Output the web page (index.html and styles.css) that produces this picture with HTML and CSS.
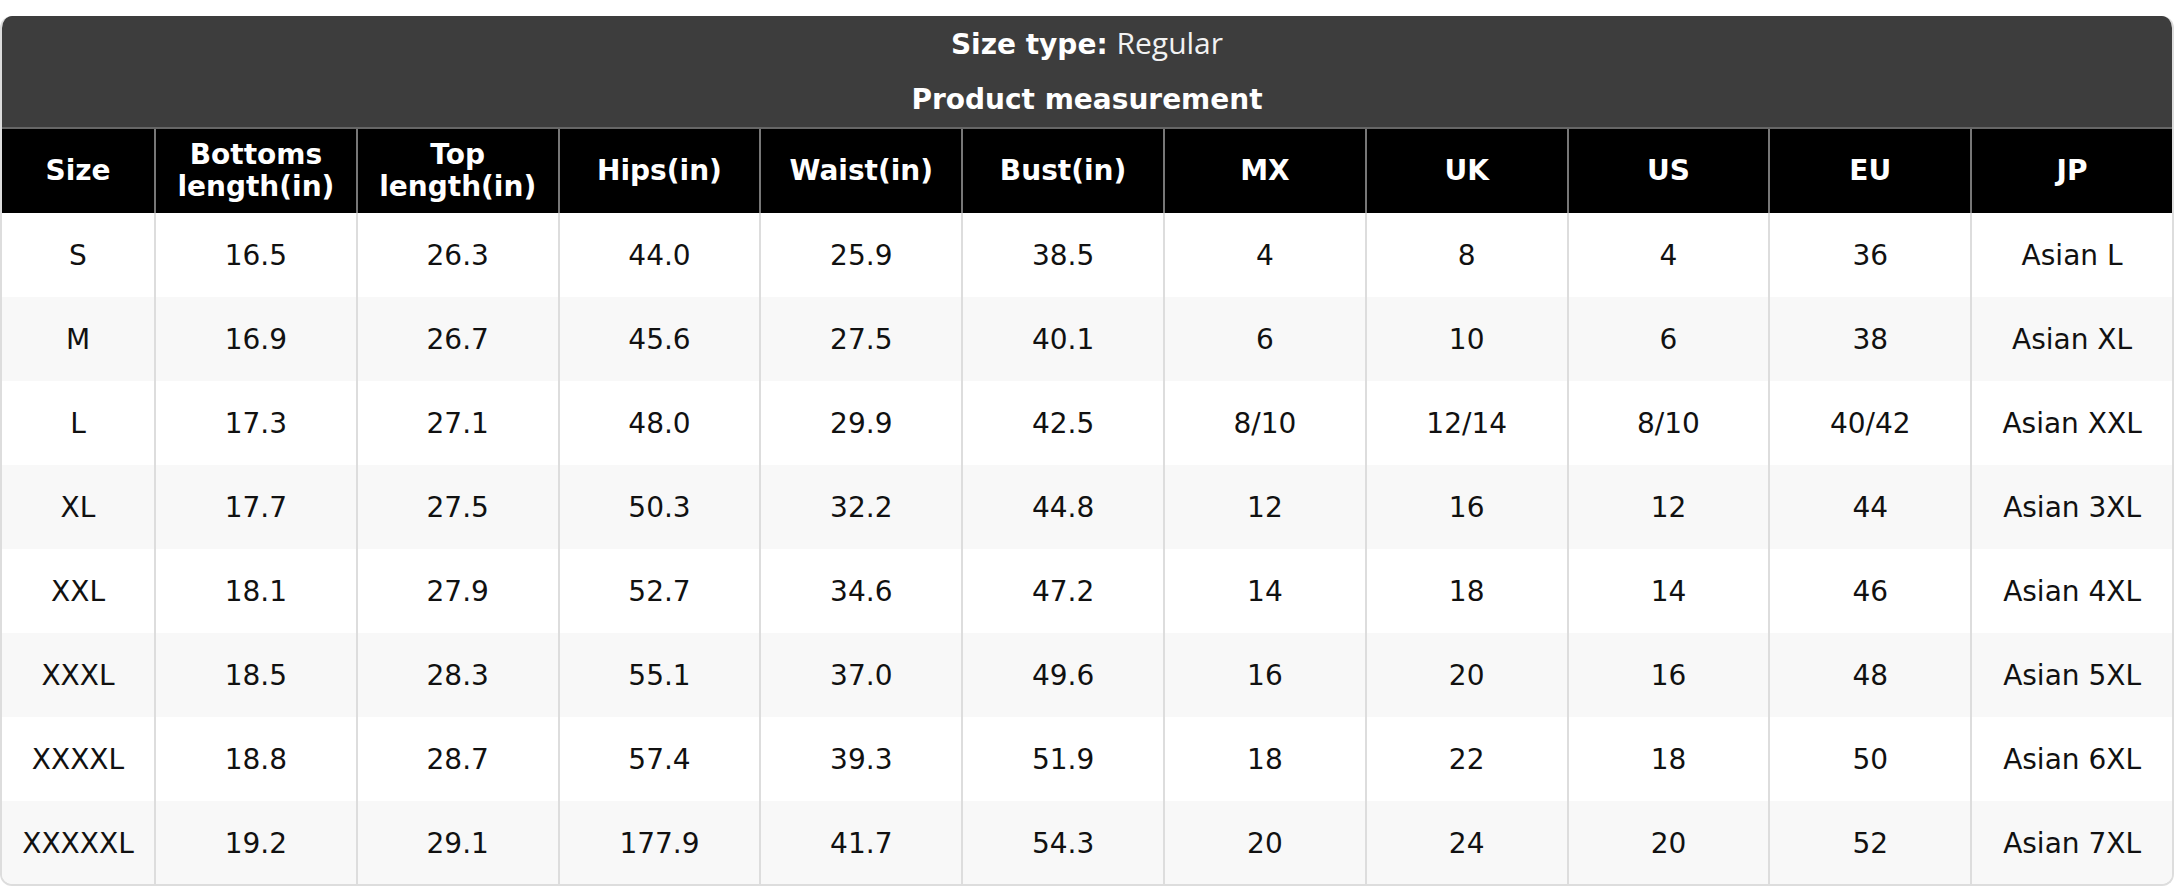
FILE: index.html
```html
<!DOCTYPE html>
<html>
<head>
<meta charset="utf-8">
<link rel="stylesheet" href="styles.css">
</head>
<body>
<div class="card">
  <div class="title">
    <div class="title-line type"><b>Size type:</b> <span class="regular">Regular</span></div>
    <div class="title-line measure">Product measurement</div>
  </div>
  <table class="sizes">
    <colgroup>
      <col class="c-size">
      <col><col><col><col><col><col><col><col><col><col>
    </colgroup>
    <thead>
      <tr>
        <th>Size</th><th>Bottoms<br>length(in)</th><th>Top<br>length(in)</th><th>Hips(in)</th><th>Waist(in)</th><th>Bust(in)</th><th>MX</th><th>UK</th><th>US</th><th>EU</th><th>JP</th>
      </tr>
    </thead>
    <tbody>
      <tr><td>S</td><td>16.5</td><td>26.3</td><td>44.0</td><td>25.9</td><td>38.5</td><td>4</td><td>8</td><td>4</td><td>36</td><td>Asian L</td></tr>
      <tr><td>M</td><td>16.9</td><td>26.7</td><td>45.6</td><td>27.5</td><td>40.1</td><td>6</td><td>10</td><td>6</td><td>38</td><td>Asian XL</td></tr>
      <tr><td>L</td><td>17.3</td><td>27.1</td><td>48.0</td><td>29.9</td><td>42.5</td><td>8/10</td><td>12/14</td><td>8/10</td><td>40/42</td><td>Asian XXL</td></tr>
      <tr><td>XL</td><td>17.7</td><td>27.5</td><td>50.3</td><td>32.2</td><td>44.8</td><td>12</td><td>16</td><td>12</td><td>44</td><td>Asian 3XL</td></tr>
      <tr><td>XXL</td><td>18.1</td><td>27.9</td><td>52.7</td><td>34.6</td><td>47.2</td><td>14</td><td>18</td><td>14</td><td>46</td><td>Asian 4XL</td></tr>
      <tr><td>XXXL</td><td>18.5</td><td>28.3</td><td>55.1</td><td>37.0</td><td>49.6</td><td>16</td><td>20</td><td>16</td><td>48</td><td>Asian 5XL</td></tr>
      <tr><td>XXXXL</td><td>18.8</td><td>28.7</td><td>57.4</td><td>39.3</td><td>51.9</td><td>18</td><td>22</td><td>18</td><td>50</td><td>Asian 6XL</td></tr>
      <tr><td>XXXXXL</td><td>19.2</td><td>29.1</td><td>177.9</td><td>41.7</td><td>54.3</td><td>20</td><td>24</td><td>20</td><td>52</td><td>Asian 7XL</td></tr>
    </tbody>
  </table>
</div>
</body>
</html>
```

FILE: styles.css
```css
html, body {
  margin: 0;
  padding: 0;
  background: #ffffff;
}

body {
  font-family: "DejaVu Sans", sans-serif;
  color: #111111;
}

.card {
  margin-top: 16px;
  border: 2px solid #dddddd;
  border-top: 0;
  border-radius: 12px;
  overflow: hidden;
  box-sizing: border-box;
  width: 2174px;
  height: 870px;
}

.title {
  background: #3d3d3d;
  color: #ffffff;
  text-align: center;
  font-size: 28px;
  border-bottom: 2px solid #666666;
}

.title-line {
  line-height: 32px;
}

.type {
  padding: 11px 0 11px;
}

.type b {
  font-weight: bold;
}

.regular {
  font-family: "Open Sans", sans-serif;
  font-size: 30px;
  font-weight: normal;
  color: #f2f2f2;
}

.measure {
  font-weight: bold;
  padding: 12px 0 11px;
}

.sizes {
  width: 100%;
  table-layout: fixed;
  border-collapse: separate;
  border-spacing: 0;
  font-size: 28px;
}

.c-size {
  width: 152px;
}

.sizes th {
  background: #000000;
  color: #ffffff;
  font-weight: bold;
  height: 84px;
  padding: 0;
  line-height: 32px;
  text-align: center;
  vertical-align: middle;
  border-left: 2px solid #777777;
  box-sizing: border-box;
}

.sizes td {
  height: 84px;
  padding: 0;
  text-align: center;
  vertical-align: middle;
  border-left: 2px solid #dddddd;
  box-sizing: border-box;
  color: #111111;
}

.sizes th:first-child,
.sizes td:first-child {
  border-left: 0;
}

.sizes tbody tr:nth-child(odd) td {
  background: #ffffff;
}

.sizes tbody tr:nth-child(even) td {
  background: #f8f8f8;
}
```
